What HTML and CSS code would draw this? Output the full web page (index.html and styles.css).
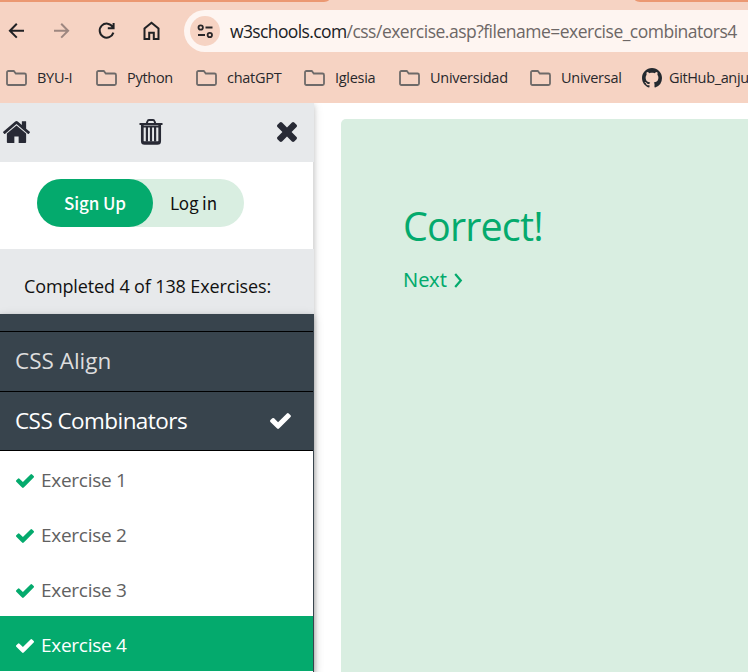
FILE: index.html
```html
<!DOCTYPE html>
<html lang="en">
<head>
<meta charset="utf-8">
<title>W3Schools Exercise</title>
<link rel="stylesheet" href="styles.css">
</head>
<body>
<svg class="defs" width="0" height="0">
  <symbol id="folder" viewBox="0 0 21 16"><path d="M2.5 1h5.3l2 2.500h8.700q1.500 0 1.500 1.500v8.500q0 1.500-1.500 1.500h-16q-1.500 0-1.500-1.500v-11q0-1.500 1.500-1.500z" fill="none" stroke="#6e6a69" stroke-width="1.800"/></symbol>
  <symbol id="check" viewBox="121 334 1550 1188"><path fill="currentColor" d="M1671 566q0 40-28 68l-724 724-136 136q-28 28-68 28t-68-28l-136-136-362-362q-28-28-28-68t28-68l136-136q28-28 68-28t68 28l294 295 656-657q28-28 68-28t68 28l136 136q28 28 28 68z"/></symbol>
</svg>
<header class="browser">
  <div class="tabs"><div class="tab-left"></div><div class="tab-right"></div></div>
  <div class="toolbar">
    <svg class="nav-icons" width="184" height="42" viewBox="0 10 184 42" fill="none" stroke="#202124" stroke-width="2">
      <path d="M24 30.700H10M16.800 23.800L9.900 30.700l6.900 6.900"/>
      <path d="M54 30.700h14M61.200 23.800l6.900 6.900-6.900 6.900" stroke="#9d8780"/>
      <path d="M112.700 27A7 7 0 1 0 113.400 32.600M113.600 23v5.200h-5.800"/>
      <path d="M144.500 39v-10.500l7-5.700 7 5.700V39h-4.700v-6.300h-4.600V39z"/>
    </svg>
    <div class="address">
      <svg width="30" height="30" viewBox="0 0 30 30"><circle cx="15" cy="15" r="15" fill="#f6d3c3"/><g fill="none" stroke="#292628" stroke-width="1.800"><circle cx="10.700" cy="11.500" r="2.200"/><path d="M15.500 11.500h7M8 19h7"/><circle cx="19.800" cy="19" r="2.200"/></g></svg>
      <div class="url"><span class="domain">w3schools.com</span><span class="path">/css/exercise.asp?filename=exercise_combinators4</span></div>
    </div>
  </div>
  <nav class="bookmarks">
    <a class="b1"><svg width="21" height="16"><use href="#folder"/></svg><span>BYU-I</span></a>
    <a class="b2"><svg width="21" height="16"><use href="#folder"/></svg><span>Python</span></a>
    <a class="b3"><svg width="21" height="16"><use href="#folder"/></svg><span>chatGPT</span></a>
    <a class="b4"><svg width="21" height="16"><use href="#folder"/></svg><span>Iglesia</span></a>
    <a class="b5"><svg width="21" height="16"><use href="#folder"/></svg><span>Universidad</span></a>
    <a class="b6"><svg width="21" height="16"><use href="#folder"/></svg><span>Universal</span></a>
    <a class="b7"><svg width="20" height="20" viewBox="0 0 16 16"><path fill="#24292f" d="M8 0C3.580 0 0 3.580 0 8c0 3.540 2.290 6.530 5.470 7.590.4.070.55-.17.55-.38 0-.19-.01-.82-.01-1.490-2.010.37-2.530-.49-2.690-.94-.09-.23-.48-.94-.82-1.130-.28-.15-.68-.52-.01-.53.63-.01 1.080.58 1.230.82.72 1.210 1.870.87 2.330.66.070-.52.28-.87.51-1.070-1.780-.2-3.640-.89-3.640-3.950 0-.87.31-1.590.82-2.150-.08-.2-.36-1.020.08-2.120 0 0 .67-.21 2.200.82.64-.18 1.320-.27 2-.27s1.360.09 2 .27c1.530-1.040 2.200-.82 2.200-.82.44 1.100.16 1.920.08 2.120.51.56.82 1.270.82 2.150 0 3.070-1.870 3.750-3.650 3.950.29.25.54.73.54 1.480 0 1.070-.01 1.930-.01 2.200 0 .21.15.46.55.38A8.010 8.010 0 0 0 16 8c0-4.420-3.580-8-8-8z"/></svg><span>GitHub_anju</span></a>
  </nav>
</header>
<main class="content">
  <aside class="sidebar">
    <div class="tools">
      <svg width="27" height="22" viewBox="89 246 1614 1290" preserveAspectRatio="none"><path fill="#282a35" d="M1472 992v480q0 26-19 45t-45 19h-384v-384h-256v384h-384q-26 0-45-19t-19-45v-480q0-1 .5-3t.5-3l575-474 575 474q1 2 1 6zm223-69l-62 74q-8 9-21 11h-3q-13 0-21-7l-692-577-692 577q-12 8-24 7-13-2-21-11l-62-74q-8-10-7-23.500t11-21.500l719-599q32-26 76-26t76 26l244 204v-195q0-14 9-23t23-9h192q14 0 23 9t9 23v408l219 182q10 8 11 21.500t-7 23.500z"/></svg>
      <svg class="trash" width="24" height="26" viewBox="0 0 24 26" fill="none" stroke="#282a35"><path stroke-width="2" d="M.5 5h23M7.500 5L8.600 2q.3-.9 1.300-.9h4.200q1 0 1.300.9l1.100 3"/><path stroke-width="2.700" d="M3.300 5.500v16.500q0 2.500 2.300 2.500h12.800q2.300 0 2.300-2.500V5.500"/><path stroke-width="2" d="M3 7.400h18M3 23.200h18"/><path stroke-width="2.200" d="M7.900 8v14.500M12 8v14.500M16.100 8v14.500"/></svg>
      <svg width="20" height="20" viewBox="302 366 1188 1188"><path fill="#282a35" d="M1490 1322q0 40-28 68l-136 136q-28 28-68 28t-68-28l-294-294-294 294q-28 28-68 28t-68-28l-136-136q-28-28-28-68t28-68l294-294-294-294q-28-28-28-68t28-68l136-136q28-28 68-28t68 28l294 294 294-294q28-28 68-28t68 28l136 136q28 28 28 68t-28 68l-294 294 294 294q28 28 28 68z"/></svg>
    </div>
    <div class="account"><div class="pill"><a class="signup">Sign Up</a><a class="login">Log in</a></div></div>
    <div class="progress"><span>Completed 4 of 138 Exercises:</span></div>
    <div class="topics">
      <div class="topic stub"></div>
      <div class="topic"><span class="align">CSS Align</span></div>
      <div class="topic current"><span class="comb">CSS Combinators</span><svg width="21" height="16"><use href="#check"/></svg></div>
      <a class="exercise"><svg width="18" height="14"><use href="#check"/></svg><span>Exercise 1</span></a>
      <a class="exercise"><svg width="18" height="14"><use href="#check"/></svg><span>Exercise 2</span></a>
      <a class="exercise"><svg width="18" height="14"><use href="#check"/></svg><span>Exercise 3</span></a>
      <a class="exercise active"><svg width="18" height="14"><use href="#check"/></svg><span>Exercise 4</span></a>
      <a class="exercise"></a>
    </div>
  </aside>
  <section class="result">
    <h2><span>Correct!</span></h2>
    <a class="next"><span>Next</span><svg width="9" height="15" viewBox="0 0 9 15"><path d="M1.200 1L6.800 7.500 1.200 14" fill="none" stroke="#04aa6d" stroke-width="2.200"/></svg></a>
  </section>
</main>
</body>
</html>
```
FILE: styles.css
```css
* { box-sizing: border-box; }
body { margin: 0; width: 748px; height: 672px; overflow: hidden; background: #fff; font-family: "Open Sans", "Noto Sans", sans-serif; }
svg { display: block; flex: none; }
.defs { position: absolute; }
.browser { height: 103px; background: #f6d3c3; }
.tabs { height: 2px; display: flex; justify-content: space-between; }
.tab-left { width: 329px; background: #eb9872; border-bottom-right-radius: 8px 2px; }
.tab-right { width: 113px; background: #eb9872; border-bottom-left-radius: 8px 2px; }
.toolbar { display: flex; padding-top: 8px; height: 50px; }
.address { flex: 1; height: 42px; background: #fef5f1; border-radius: 21px 0 0 21px; display: flex; align-items: center; padding-left: 6px; }
.url { margin-left: 10px; font-size: 17.500px; white-space: nowrap; color: #202124; }
.domain { letter-spacing: -0.620px; }
.path { color: #6d6766; letter-spacing: -0.500px; }
.bookmarks { height: 51px; display: flex; align-items: center; font-size: 14.500px; color: #28282c; white-space: nowrap; }
.bookmarks a { display: flex; align-items: center; gap: 10px; flex: none; letter-spacing: -0.280px; }
.bookmarks .b7 { gap: 7px; letter-spacing: -0.360px; }
.b1 { width: 90px; margin-left: 6px; }
.b2 { width: 100px; }
.b3 { width: 108px; }
.b4 { width: 95px; }
.b5 { width: 131px; }
.b6 { width: 112px; }
.content { height: 569px; display: flex; overflow: hidden; }
.sidebar { width: 314px; flex: none; background: #fff; box-shadow: 0 2px 5px rgba(0,0,0,.16), 0 2px 10px rgba(0,0,0,.12); }
.tools { height: 59px; background: #e7e9eb; display: flex; align-items: center; justify-content: space-between; padding: 0 17px 1px 3px; }
.tools .trash { margin-right: 5px; }
.account { height: 87px; padding: 17px 0 0 37px; border-right: 1px solid #dcdcdc; }
.pill { width: 207px; height: 48px; border-radius: 24px; background: #d9eee1; display: flex; font: 17px/47px "Noto Sans CJK SC", sans-serif; }
.signup { width: 116px; border-radius: 24px; background: #04aa6d; color: #fff; text-align: center; font-weight: 500; letter-spacing: -0.100px; }
.login { padding-left: 17px; color: #111; letter-spacing: -0.150px; }
.progress { height: 65px; background: #e7e9eb; padding: 10px 0 0 24px; line-height: 54px; font-size: 18px; letter-spacing: -0.130px; color: #111; white-space: nowrap; }
.topics { border-right: 1px solid #38444d; box-shadow: 0 2px 5px rgba(0,0,0,.16), 0 2px 10px rgba(0,0,0,.12); }
.topic { height: 60px; background: #38444d; border-bottom: 1px solid #000; display: flex; align-items: center; justify-content: space-between; padding: 0 22px 0 15px; font-size: 22.500px; color: #ddd; white-space: nowrap; }
.topic span { margin-top: -2px; }
.comb { letter-spacing: -0.560px; }
.topic.stub { height: 18px; }
.topic.current { height: 59px; color: #fff; }
.exercise { height: 55px; display: flex; align-items: center; gap: 7px; padding: 4px 0 0 16px; background: #fff; color: #04aa6d; font-size: 19px; }
.exercise span { color: #616161; margin-top: -2px; letter-spacing: -0.270px; }
.exercise.active { background: #04aa6d; color: #fff; }
.exercise.active span { color: #fff; }
.result { flex: 1; margin: 16px 0 0 27px; padding: 80px 0 0 63px; background: #d9eee1; border-top-left-radius: 5px; color: #04aa6d; }
h2 { margin: 0 0 0 -1px; font-size: 39.500px; line-height: 54px; font-weight: 400; letter-spacing: -0.850px; }
.next { display: flex; align-items: center; gap: 7px; margin-top: 12px; font: 20px/30px "Noto Sans", sans-serif; }
.next span { margin-left: -1px; }
```
